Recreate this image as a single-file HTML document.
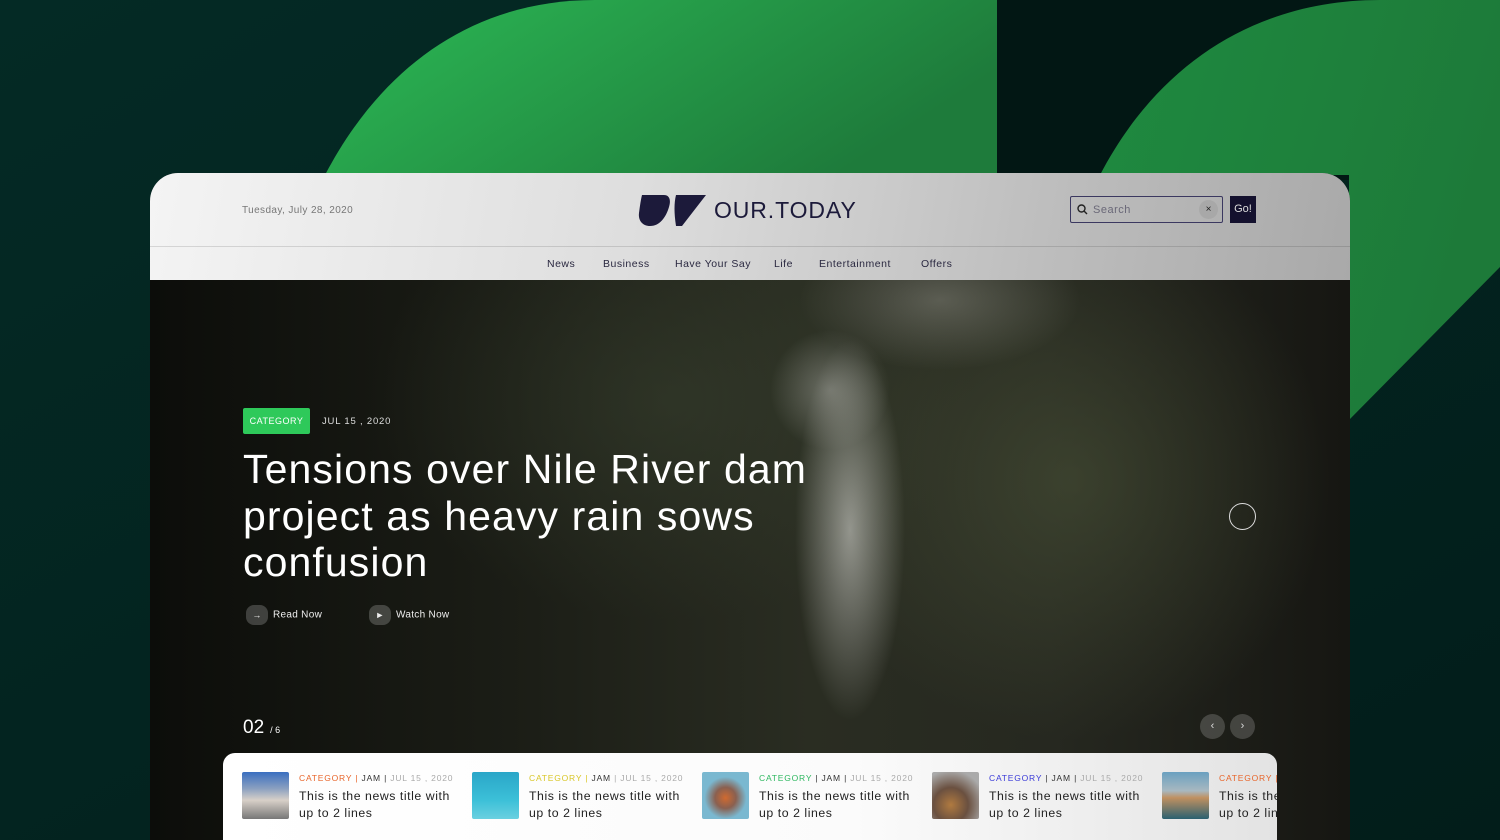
<!DOCTYPE html>
<html><head><meta charset="utf-8"><style>
*{margin:0;padding:0;box-sizing:border-box}
html,body{width:1500px;height:840px;overflow:hidden}
body{background:#032621;font-family:"Liberation Sans","DejaVu Sans",sans-serif;position:relative}
.bg{position:absolute;left:0;top:0}
.card{position:absolute;left:150px;top:173px;width:1200px;height:667px;border-radius:28px 28px 0 0;overflow:hidden;background:#111}
.hdr{position:absolute;left:0;top:0;width:1200px;height:107px;background:linear-gradient(100deg,#f4f4f4 0%,#dedede 40%,#bdbdbd 75%,#a9a9a9 100%)}
.hdr .line{position:absolute;left:0;right:0;top:73px;height:1px;background:rgba(0,0,0,0.12)}
.date{position:absolute;left:92px;top:32px;font-size:10px;color:#777;letter-spacing:0.4px}
.logo{position:absolute;left:488px;top:20px}
.logotxt{position:absolute;left:564px;top:24px;font-size:23px;color:#1c1a3a;letter-spacing:0.9px}
.search{position:absolute;left:920px;top:23px;width:153px;height:27px;border:1px solid #3b3860;border-radius:2px}
.search span{position:absolute;left:22px;top:7px;font-size:11px;color:#6a6878;letter-spacing:0.5px}
.search .x{position:absolute;left:128px;top:3px;width:19px;height:19px;border-radius:50%;background:rgba(0,0,0,0.06);font-size:10px;color:#222;text-align:center;line-height:19px}
.go{position:absolute;left:1080px;top:23px;width:26px;height:27px;background:#14112e;color:#ddd;font-size:11px;text-align:center;line-height:27px}
.nav{position:absolute;top:85px;font-size:10.5px;color:#2a2840;letter-spacing:0.5px}
.hero{position:absolute;left:0;top:107px;width:1200px;height:560px;
background:
radial-gradient(ellipse 55px 190px at 700px 250px,rgba(215,215,210,0.6),rgba(0,0,0,0) 100%),
radial-gradient(ellipse 60px 60px at 680px 110px,rgba(200,200,195,0.4),rgba(0,0,0,0) 100%),
radial-gradient(ellipse 140px 70px at 790px 20px,rgba(150,150,140,0.45),rgba(0,0,0,0) 100%),
radial-gradient(ellipse 260px 260px at 920px 200px,rgba(80,90,60,0.5),rgba(0,0,0,0) 100%),
radial-gradient(ellipse 300px 220px at 520px 120px,rgba(60,70,50,0.45),rgba(0,0,0,0) 100%),
linear-gradient(90deg,#0c0d0a 0%,#1b1d16 30%,#2a2d22 55%,#262820 75%,#161612 100%)}
.tag{position:absolute;left:93px;top:128px;width:67px;height:26px;background:#2ec95a;border-radius:2px;color:#fff;font-size:9px;line-height:26px;text-align:center;letter-spacing:0.5px}
.hdate{position:absolute;left:172px;top:136px;color:#ddd;font-size:9.5px;letter-spacing:0.8px}
h1{position:absolute;left:93px;top:166px;width:660px;color:#fff;font-weight:400;font-size:41px;line-height:46.5px;letter-spacing:1.1px}
.btn{position:absolute;top:325px;color:#eee;font-size:10px;letter-spacing:0.3px}
.btn i{display:inline-block;width:22px;height:20px;border-radius:8px;background:rgba(255,255,255,0.2);vertical-align:middle;margin-right:5px;text-align:center;line-height:20px;font-style:normal;font-size:9px}
.num{position:absolute;left:93px;top:437px;color:#fff;font-size:19px}
.num small{font-size:9px;margin-left:6px}
.circ{position:absolute;left:1079px;top:223px;width:27px;height:27px;border:1.5px solid #ddd;border-radius:50%}
.arr{position:absolute;top:434px;width:25px;height:25px;border-radius:50%;background:rgba(255,255,255,0.18);color:#ddd;text-align:center;line-height:24px;font-size:11px}
.strip{position:absolute;left:223px;top:753px;width:1054px;height:87px;border-radius:12px 12px 0 0;background:linear-gradient(90deg,#fff 0%,#fbfbfb 60%,#e3e3e3 100%);overflow:hidden}
.it{position:absolute;top:19px}
.th{position:absolute;left:0;top:0;width:47px;height:47px;border-radius:2px}
.meta{position:absolute;left:57px;top:1px;font-size:8.5px;white-space:nowrap;letter-spacing:0.8px;color:#333}
.meta .d{color:#aaa}
.tt{position:absolute;left:57px;top:16px;width:170px;font-size:12.3px;line-height:17px;color:#222;white-space:nowrap;letter-spacing:0.55px}
</style></head><body>
<svg class="bg" width="1500" height="840">
<defs>
<linearGradient id="g1" x1="0" y1="0" x2="1" y2="0.4"><stop offset="0" stop-color="#2cb955"/><stop offset="1" stop-color="#1e7b3b"/></linearGradient>
<linearGradient id="g2" x1="0" y1="0" x2="1" y2="0.3"><stop offset="0" stop-color="#1f8a40"/><stop offset="1" stop-color="#1d7a39"/></linearGradient>
<linearGradient id="bgg" x1="0" y1="0" x2="1" y2="1"><stop offset="0" stop-color="#042a25"/><stop offset="1" stop-color="#021d1a"/></linearGradient>
</defs>
<rect width="1500" height="840" fill="url(#bgg)"/>
<rect x="997" y="0" width="503" height="180" fill="#021714"/>
<path d="M325,175 C380,70 470,0 595,0 L997,0 L997,175 Z" fill="url(#g1)"/>
<path d="M1100,175 C1160,60 1260,0 1380,0 L1500,0 L1500,267 L1349,420 L1349,175 Z" fill="url(#g2)"/>
</svg>
<div class="card">
 <div class="hdr">
  <div class="line"></div>
  <div class="date">Tuesday, July 28, 2020</div>
  <svg class="logo" width="70" height="36" viewBox="0 0 70 36"><path d="M4,2 L26,2 C32,2 33,8 31,14 C28,24 22,33 12,33 C5,33 0,28 1,20 C2,12 3,6 4,2 Z" fill="#1c1a3a"/><path d="M38,2 L68,2 L44,33 L38,33 C36,20 36,10 38,2 Z" fill="#1c1a3a"/></svg>
  <div class="logotxt">OUR.TODAY</div>
  <div class="search"><svg style="position:absolute;left:6px;top:7px" width="11" height="11"><circle cx="4.5" cy="4.5" r="3.5" stroke="#222" stroke-width="1.4" fill="none"/><path d="M7,7 L10,10" stroke="#222" stroke-width="1.4"/></svg><span>Search</span><div class="x">×</div></div>
  <div class="go">Go!</div>
  <div class="nav" style="left:397px">News</div>
  <div class="nav" style="left:453px">Business</div>
  <div class="nav" style="left:525px">Have Your Say</div>
  <div class="nav" style="left:624px">Life</div>
  <div class="nav" style="left:669px">Entertainment</div>
  <div class="nav" style="left:771px">Offers</div>
 </div>
 <div class="hero">
  <div class="tag">CATEGORY</div>
  <div class="hdate">JUL 15 , 2020</div>
  <h1>Tensions over Nile River dam project as heavy rain sows confusion</h1>
  <div class="btn" style="left:96px"><i>→</i>Read Now</div>
  <div class="btn" style="left:219px"><i>►</i>Watch Now</div>
  <div class="num">02<small>/ 6</small></div>
  <div class="circ"></div>
  <div class="arr" style="left:1050px">‹</div>
  <div class="arr" style="left:1080px">›</div>
 </div>
</div>
<div class="strip">
 <div class="it" style="left:19px"><div class="th" style="background:linear-gradient(180deg,#3a6fc0 0%,#8aa0c0 35%,#d8d0c8 60%,#777 100%)"></div><div class="meta"><span style="color:#e8652a">CATEGORY</span> <span style="color:#e8652a">|</span> JAM | <span class="d">JUL 15 , 2020</span></div><div class="tt">This is the news title with<br>up to 2 lines</div></div>
 <div class="it" style="left:249px"><div class="th" style="background:linear-gradient(180deg,#2aa6c8,#3cc0d8 60%,#6ad0e0)"></div><div class="meta"><span style="color:#d9c728">CATEGORY</span> <span style="color:#d9c728">|</span> JAM <span class="d">| JUL 15 , 2020</span></div><div class="tt">This is the news title with<br>up to 2 lines</div></div>
 <div class="it" style="left:479px"><div class="th" style="background:radial-gradient(circle at 50% 55%,#d06a30 0,#8a6050 30%,#7ab8d0 60%)"></div><div class="meta"><span style="color:#2eb860">CATEGORY</span> | JAM | <span class="d">JUL 15 , 2020</span></div><div class="tt">This is the news title with<br>up to 2 lines</div></div>
 <div class="it" style="left:709px"><div class="th" style="background:radial-gradient(circle at 40% 70%,#b07a40 0,#6a5040 40%,#aaa 80%)"></div><div class="meta"><span style="color:#3a3ad8">CATEGORY</span> | JAM | <span class="d">JUL 15 , 2020</span></div><div class="tt">This is the news title with<br>up to 2 lines</div></div>
 <div class="it" style="left:939px"><div class="th" style="background:linear-gradient(180deg,#6aa0c0 0%,#a8b8c0 40%,#c09060 55%,#2a6070 100%)"></div><div class="meta"><span style="color:#e8652a">CATEGORY |</span></div><div class="tt">This is the news title with<br>up to 2 lines</div></div>
</div>
</body></html>
